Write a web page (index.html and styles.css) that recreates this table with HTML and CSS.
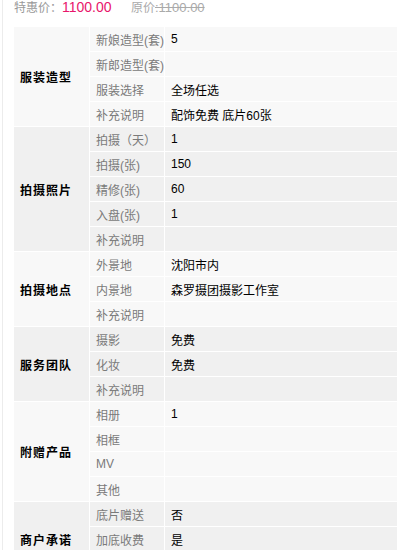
FILE: index.html
```html
<!DOCTYPE html>
<html lang="zh-CN">
<head>
<meta charset="utf-8">
<title>套系详情</title>
<link rel="stylesheet" href="styles.css">
</head>
<body>
<div class="page">
  <div class="price">
    <span class="price-label">特惠价：</span><span class="price-now">1100.00</span>
    <span class="price-old">原价<del>:1100.00</del></span>
  </div>

  <table class="spec">
    <colgroup>
      <col class="c-group">
      <col class="c-label">
      <col class="c-value">
    </colgroup>
    <tbody class="light">
      <tr><th rowspan="4">服装造型</th><td class="k">新娘造型(套)</td><td class="v">5</td></tr>
      <tr><td class="k">新郎造型(套)</td><td class="v"></td></tr>
      <tr><td class="k">服装选择</td><td class="v">全场任选</td></tr>
      <tr><td class="k">补充说明</td><td class="v">配饰免费 底片60张</td></tr>
    </tbody>
    <tbody class="dark">
      <tr><th rowspan="5">拍摄照片</th><td class="k">拍摄（天）</td><td class="v">1</td></tr>
      <tr><td class="k">拍摄(张)</td><td class="v">150</td></tr>
      <tr><td class="k">精修(张)</td><td class="v">60</td></tr>
      <tr><td class="k">入盘(张)</td><td class="v">1</td></tr>
      <tr><td class="k">补充说明</td><td class="v"></td></tr>
    </tbody>
    <tbody class="light">
      <tr><th rowspan="3">拍摄地点</th><td class="k">外景地</td><td class="v">沈阳市内</td></tr>
      <tr><td class="k">内景地</td><td class="v">森罗摄团摄影工作室</td></tr>
      <tr><td class="k">补充说明</td><td class="v"></td></tr>
    </tbody>
    <tbody class="dark">
      <tr><th rowspan="3">服务团队</th><td class="k">摄影</td><td class="v">免费</td></tr>
      <tr><td class="k">化妆</td><td class="v">免费</td></tr>
      <tr><td class="k">补充说明</td><td class="v"></td></tr>
    </tbody>
    <tbody class="light">
      <tr><th rowspan="4">附赠产品</th><td class="k">相册</td><td class="v">1</td></tr>
      <tr><td class="k">相框</td><td class="v"></td></tr>
      <tr><td class="k">MV</td><td class="v"></td></tr>
      <tr><td class="k">其他</td><td class="v"></td></tr>
    </tbody>
    <tbody class="dark">
      <tr><th rowspan="3">商户承诺</th><td class="k">底片赠送</td><td class="v">否</td></tr>
      <tr><td class="k">加底收费</td><td class="v">是</td></tr>
      <tr><td class="k">补充说明</td><td class="v"></td></tr>
    </tbody>
  </table>
</div>
</body>
</html>
```

FILE: styles.css
```css
html, body {
  margin: 0;
  padding: 0;
  background: #fff;
}

body {
  font-family: "Liberation Sans", Arial, "Noto Sans CJK SC", sans-serif;
  font-size: 12px;
  color: #000;
}

.page {
  margin-left: 2px;
  border-left: 1px solid #ececec;
  padding-left: 11px;
  min-height: 550px;
}

/* price line */
.price {
  height: 27px;
  line-height: 14px;
  color: #999;
  white-space: nowrap;
}

.price-label {
  font-size: 12px;
}

.price-now {
  font-size: 14px;
  color: #e8166b;
}

.price-old {
  margin-left: 16px;
  font-size: 12px;
  color: #aaa;
}

.price-old del {
  font-size: 13px;
  color: #aaa;
}

/* spec table */
.spec {
  border-collapse: separate;
  border-spacing: 0;
  table-layout: fixed;
  width: 383px;
}

.c-group { width: 76px; }
.c-label { width: 75px; }
.c-value { width: 232px; }

.spec th,
.spec td {
  height: 24px;
  padding: 0 0 0 6px;
  border-right: 1px solid #fff;
  border-bottom: 1px solid #fff;
  text-align: left;
  vertical-align: middle;
  white-space: nowrap;
  overflow: hidden;
}

.spec th {
  font-weight: bold;
  color: #000;
  letter-spacing: 1px;
}

.spec td.k {
  color: #7a7a7a;
}

.spec td.v {
  color: #000;
  border-right: 0;
}

.light th,
.light td {
  background: #f8f8f8;
}

.dark th,
.dark td {
  background: #f0f0f0;
}
```
